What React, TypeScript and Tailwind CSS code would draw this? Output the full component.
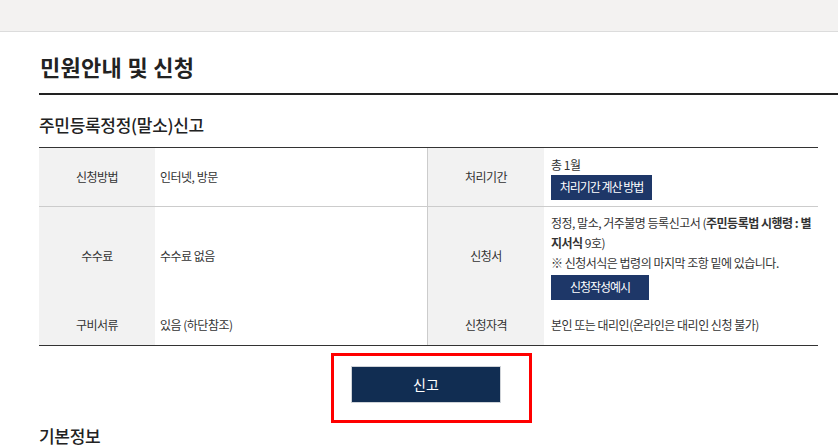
const font = "font-['Noto_Sans_CJK_KR','Noto_Sans',sans-serif]"

function Label({ children, className = '' }: { children: React.ReactNode; className?: string }) {
  return (
    <div className={`flex items-center justify-center bg-[#f2f2f2] text-[12px] tracking-[-0.5px] text-[#333] ${className}`}>
      {children}
    </div>
  )
}

function Value({ children, className = '' }: { children: React.ReactNode; className?: string }) {
  return (
    <div className={`flex flex-col justify-center text-[12px] tracking-[-0.5px] text-[#333] ${className}`}>
      {children}
    </div>
  )
}

function NavyButton({ children, className = '' }: { children: React.ReactNode; className?: string }) {
  return (
    <button className={`flex h-[25px] items-center justify-center bg-[#1e3768] text-[12px] tracking-[-1px] text-white ${className}`}>
      {children}
    </button>
  )
}

export default function App() {
  return (
    <div className={`${font} min-h-[446px] w-[838px] overflow-hidden bg-white`}>
      <div className="h-[32px] border-b border-[#dcdcdc] bg-[#f3f2f1]" />

      <div className="pl-[39px]">
        <h1 className="mt-[21px] pl-px text-[22px] leading-[26px] font-bold tracking-[0.3px] text-[#222]">
          민원안내 및 신청
        </h1>
        <div className="mt-[14px] h-[2px] bg-[#222]" />

        <h2 className="mt-[19px] text-[17px] leading-[22px] font-medium tracking-[-0.3px] text-[#222]">
          주민등록정정(말소)신고
        </h2>

        <div className="mt-[11px] mr-[20px] border-t border-b border-[#333]">
          <div className="grid grid-cols-[116px_272px_117px_274px]">
            {/* row 1 */}
            <Label className="h-[59px] border-b border-[#ccc]">신청방법</Label>
            <Value className="h-[59px] border-b border-[#ccc] pl-[5px]">인터넷, 방문</Value>
            <Label className="h-[59px] border-b border-l border-[#ccc]">처리기간</Label>
            <Value className="h-[59px] border-b border-[#ccc] pl-[7px]">
              <div className="leading-[20px]">총 1월</div>
              <NavyButton className="w-[101px]">처리기간 계산 방법</NavyButton>
            </Value>

            {/* row 2 */}
            <Label className="h-[98px]">수수료</Label>
            <Value className="h-[98px] pl-[5px]">수수료 없음</Value>
            <Label className="h-[98px] border-l border-[#ccc]">신청서</Label>
            <Value className="h-[98px] pl-[7px]">
              <div className="leading-[20px] whitespace-nowrap">
                정정, 말소, 거주불명 등록신고서 (<b>주민등록법 시행령 : 별</b>
                <br />
                <b>지서식</b> 9호)
              </div>
              <div className="leading-[20px]">※ 신청서식은 법령의 마지막 조항 밑에 있습니다.</div>
              <NavyButton className="mt-[2px] w-[98px]">신청작성예시</NavyButton>
            </Value>

            {/* row 3 */}
            <Label className="h-[40px]">구비서류</Label>
            <Value className="h-[40px] pl-[5px]">있음 (하단참조)</Value>
            <Label className="h-[40px] border-l border-[#ccc]">신청자격</Label>
            <Value className="h-[40px] pl-[7px]">본인 또는 대리인(온라인은 대리인 신청 불가)</Value>
          </div>
        </div>

        <div className="mt-[20px] mr-[25px] flex justify-center">
          <div className="relative">
            <button className="flex h-[37px] w-[150px] items-center justify-center border border-[#cfd3d8] bg-[#112d52] text-[14px] text-white">
              신고
            </button>
            <div className="pointer-events-none absolute top-[-13px] right-[-31px] bottom-[-20px] left-[-20px] border-[3px] border-[#ff0000]" />
          </div>
        </div>

        <h2 className="mt-[22px] text-[17px] leading-[22px] font-medium tracking-[-0.3px] text-[#222]">
          기본정보
        </h2>
      </div>
    </div>
  )
}
